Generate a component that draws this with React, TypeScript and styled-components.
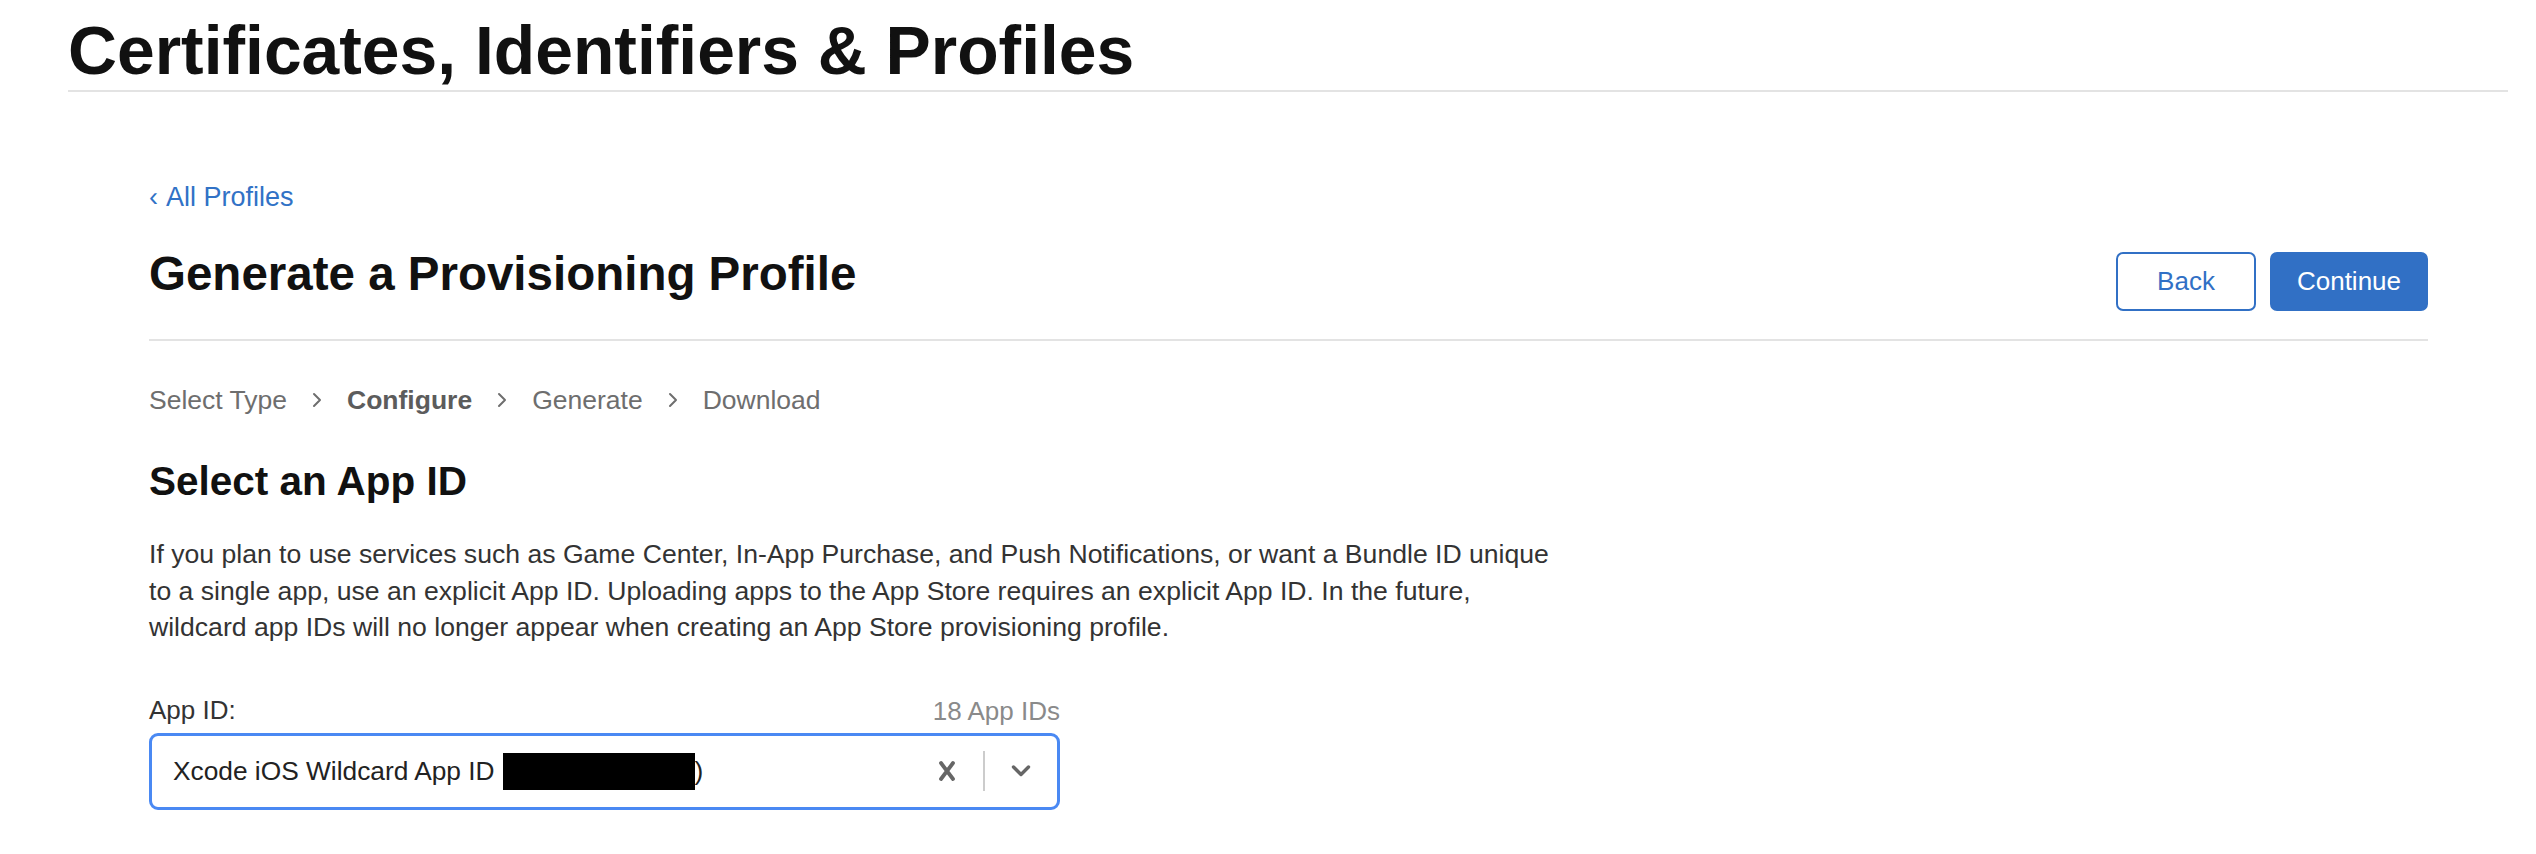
import React from "react";
import styled, { createGlobalStyle } from "styled-components";

const GlobalStyle = createGlobalStyle`
  html, body { margin: 0; padding: 0; background: #ffffff; }
  body {
    font-family: "Liberation Sans", Arial, Helvetica, sans-serif;
    color: #1d1d1f;
    -webkit-font-smoothing: antialiased;
  }
  * { box-sizing: border-box; }
`;

const Header = styled.header`
  margin-left: 68px;
  width: 2440px;
  padding-top: 17px;
  padding-bottom: 5px;
  border-bottom: 2px solid #e3e3e3;
`;

const SiteTitle = styled.h1`
  margin: 0;
  font-size: 67.8px;
  line-height: 68px;
  font-weight: 700;
  color: #111111;
`;

const Main = styled.main`
  margin-left: 149px;
  width: 2279px;
  padding-top: 89px;
`;

const BackLink = styled.a`
  display: flex;
  align-items: center;
  font-size: 27px;
  line-height: 32px;
  color: #3172c6;
  text-decoration: none;
  margin-bottom: 33px;
`;

const BackGlyph = styled.span`
  margin-right: 8px;
`;

const HeadRow = styled.div`
  display: flex;
  justify-content: space-between;
  align-items: flex-start;
  padding-bottom: 28px;
  border-bottom: 2px solid #e3e3e3;
`;

const PageTitle = styled.h2`
  margin: 0;
  font-size: 47.5px;
  line-height: 56px;
  font-weight: 700;
  color: #111111;
`;

const Actions = styled.div`
  display: flex;
  gap: 14px;
  margin-top: 6px;
`;

const Button = styled.button<{ $primary?: boolean; $w: number }>`
  width: ${(p) => p.$w}px;
  height: 59px;
  border-radius: 7px;
  border: 2px solid #3170c5;
  background: ${(p) => (p.$primary ? "#3170c5" : "#ffffff")};
  color: ${(p) => (p.$primary ? "#ffffff" : "#3170c5")};
  font-family: inherit;
  font-size: 26px;
  padding: 0;
  cursor: pointer;
`;

const Steps = styled.nav`
  display: flex;
  align-items: center;
  margin-top: 42px;
  font-size: 26.5px;
  line-height: 34px;
  color: #6e6e6e;
`;

const Step = styled.span<{ $active?: boolean }>`
  font-weight: ${(p) => (p.$active ? 700 : 400)};
  color: ${(p) => (p.$active ? "#5c5c5c" : "#6e6e6e")};
`;

const StepSep = styled.svg`
  margin: 0 25px;
  flex: none;
`;

const SectionTitle = styled.h3`
  margin: 41px 0 0;
  font-size: 40.5px;
  line-height: 46px;
  font-weight: 700;
  color: #111111;
`;

const Intro = styled.p`
  margin: 32px 0 0;
  max-width: 1424px;
  font-size: 26.6px;
  line-height: 36.6px;
  color: #333333;
`;

const FieldHead = styled.div`
  display: flex;
  justify-content: space-between;
  align-items: flex-end;
  width: 911px;
  margin-top: 48px;
`;

const FieldLabel = styled.label`
  font-size: 26px;
  line-height: 32px;
  color: #333333;
`;

const FieldCount = styled.span`
  font-size: 26px;
  line-height: 30px;
  color: #8a8a8a;
`;

const SelectBox = styled.div`
  margin-top: 7px;
  width: 911px;
  height: 77px;
  border: 3px solid #4a89f3;
  border-radius: 9px;
  display: flex;
  align-items: center;
  padding-left: 21px;
`;

const SelectValue = styled.div`
  flex: 1;
  display: flex;
  align-items: center;
  font-size: 26.3px;
  color: #222222;
  white-space: nowrap;
`;

const Redacted = styled.span`
  display: inline-block;
  width: 192px;
  height: 37px;
  margin-left: 8px;
  background: #000000;
`;

const Indicator = styled.div`
  width: 72px;
  height: 100%;
  display: flex;
  align-items: center;
  justify-content: center;
  color: #666666;
`;

const IndicatorSep = styled.span`
  width: 2px;
  height: 40px;
  background: #cccccc;
`;

const Chevron = () => (
  <StepSep width="10" height="16" viewBox="0 0 10 16" fill="none">
    <path d="M2 2 L8 8 L2 14" stroke="#6e6e6e" strokeWidth="2" strokeLinecap="round" strokeLinejoin="round" />
  </StepSep>
);

export default function App() {
  return (
    <>
      <GlobalStyle />
      <Header>
        <SiteTitle>Certificates, Identifiers &amp; Profiles</SiteTitle>
      </Header>
      <Main>
        <BackLink href="#">
          <BackGlyph>‹</BackGlyph>All Profiles
        </BackLink>
        <HeadRow>
          <PageTitle>Generate a Provisioning Profile</PageTitle>
          <Actions>
            <Button $w={140}>Back</Button>
            <Button $w={158} $primary>
              Continue
            </Button>
          </Actions>
        </HeadRow>
        <Steps>
          <Step>Select Type</Step>
          <Chevron />
          <Step $active>Configure</Step>
          <Chevron />
          <Step>Generate</Step>
          <Chevron />
          <Step>Download</Step>
        </Steps>
        <SectionTitle>Select an App ID</SectionTitle>
        <Intro>
          If you plan to use services such as Game Center, In-App Purchase, and Push Notifications, or want a Bundle ID
          unique to a single app, use an explicit App ID. Uploading apps to the App Store requires an explicit App ID. In
          the future, wildcard app IDs will no longer appear when creating an App Store provisioning profile.
        </Intro>
        <FieldHead>
          <FieldLabel>App ID:</FieldLabel>
          <FieldCount>18 App IDs</FieldCount>
        </FieldHead>
        <SelectBox>
          <SelectValue>
            Xcode iOS Wildcard App ID
            <Redacted />)
          </SelectValue>
          <Indicator>
            <svg width="20" height="24" viewBox="0 0 20 24" fill="none">
              <path d="M4 4 L16 20 M16 4 L4 20" stroke="#666666" strokeWidth="3.8" strokeLinecap="round" />
            </svg>
          </Indicator>
          <IndicatorSep />
          <Indicator>
            <svg width="22" height="14" viewBox="0 0 22 14" fill="none">
              <path d="M3.5 3 L11 10.5 L18.5 3" stroke="#666666" strokeWidth="3.4" strokeLinecap="round" strokeLinejoin="round" />
            </svg>
          </Indicator>
        </SelectBox>
      </Main>
    </>
  );
}
